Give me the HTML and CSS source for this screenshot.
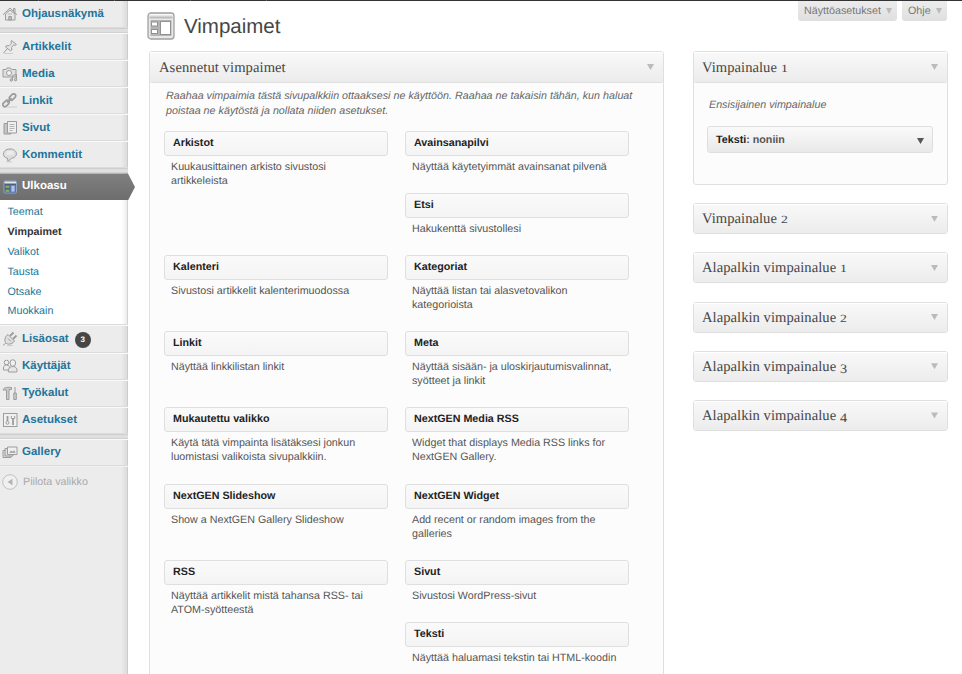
FILE: index.html
```html
<!DOCTYPE html>
<html lang="fi">
<head>
<meta charset="utf-8">
<title>Vimpaimet</title>
<link rel="stylesheet" href="styles.css">
</head>
<body>
<div class="topbar"><i></i><i></i><i></i><i></i></div>
<div class="layout">
<nav class="sidebar">
  <a class="item first"><svg class="ico" viewBox="0 0 16 16"><path d="M3.500 8v6h9.500V8L8 4z" fill="#e6e6e6"/><path d="M1 8.800 8 2l7 6.800M11.500 5V2.500H13V7"/><path d="M6.800 14v-3.500h2.600V14z" fill="#bbb"/><path d="M6 8h4" stroke="#bbb"/></svg><span>Ohjausnäkymä</span></a>
  <div class="sep"></div>
  <a class="item"><svg class="ico" viewBox="0 0 16 16"><path d="m9.500 1.500 5 4-1.500.8-1.500-.3-2 2.500.3 2.500-1.300.8L3.500 8l.8-1.300 2.700.1L9.500 4.300 9 2.500z" fill="#e6e6e6"/><path d="m5.500 9.500-4 4.500"/><path d="M2 14.500h9" stroke="#ccc"/></svg><span>Artikkelit</span></a>
  <a class="item"><svg class="ico" viewBox="0 0 16 16"><path d="M1 3.500h3l1-1.500h3.500l1 1.500H14V11H1z" fill="#e0e0e0"/><circle cx="7" cy="7" r="2.500" fill="#f5f5f5"/><path d="M10.500 14V9.500l4-1v5"/><circle cx="9.300" cy="14" r="1.200" fill="#ccc"/><circle cx="13.500" cy="13.700" r="1.200" fill="#ccc"/></svg><span>Media</span></a>
  <a class="item"><svg class="ico" viewBox="0 0 16 16"><g stroke-width="1.700"><rect x="-3.600" y="-2" width="7.200" height="4" rx="2" transform="translate(10.500 4) rotate(-45)"/><rect x="-3.600" y="-2" width="7.200" height="4" rx="2" transform="translate(4 10.500) rotate(-45)"/><path d="m5 9.500 4.500-4.500"/></g><path d="M5 14h10" stroke="#ccc"/></svg><span>Linkit</span></a>
  <a class="item"><svg class="ico" viewBox="0 0 16 16"><path d="M5 3.500H2V14h7v-1" fill="#c4c4c4"/><path d="M5.500 1.500h9v11.500h-9z" fill="#f0f0f0"/><path d="M7.500 4.500h5M7.500 6.500h5M7.500 8.500h5M7.500 10.500h3" stroke="#b4b4b4"/></svg><span>Sivut</span></a>
  <a class="item"><svg class="ico" viewBox="0 0 16 16"><path d="M5.500 11.300C-1 10 .5 2 8 2s9 8 1.500 9.300L6 14.500z" fill="#dedede"/><path d="M4.500 5h7M4.500 7h7" stroke="#f8f8f8"/><path d="M4 14.800h6" stroke="#ccc"/></svg><span>Kommentit</span></a>
  <div class="sep"></div>
  <a class="item active"><svg class="ico" viewBox="0 0 16 16"><rect x="2" y="2" width="12.500" height="12" rx="1" fill="#4b6070" stroke="#8fa5c0"/><path d="M2.500 3.500h11.500" stroke="#e4e9ef" stroke-width="2"/><path d="M3.500 6.500h4V9h-4zM3.500 10.500h4V13h-4z" fill="#7cac65" stroke="none"/><rect x="9" y="6.500" width="4" height="6.500" fill="#b4c3ec" stroke="#6986d3"/></svg><span>Ulkoasu</span></a>
  <div class="submenu">
    <a>Teemat</a><a class="current">Vimpaimet</a><a>Valikot</a><a>Tausta</a><a>Otsake</a><a>Muokkain</a>
  </div>
  <a class="item"><svg class="ico" viewBox="0 0 16 16"><path d="m6 3.500 6.500 6.500c-1.500 2.500-5 4-8 2.500l-1-1C2 8.500 3.500 5 6 3.500z" fill="#e0e0e0"/><path d="m8 5 3.500-3.500M11 8l3.500-3.500" stroke-width="1.800"/><path d="M3.800 12 1 14.500M6 7.500l3 3"/><path d="M5 14.500h6" stroke="#ccc"/></svg><span>Lisäosat</span><b class="count">3</b></a>
  <a class="item"><svg class="ico" viewBox="0 0 16 16"><circle cx="4.500" cy="4.500" r="2.300" fill="#f0f0f0"/><path d="M1.500 12c-.5-3 .5-5 3-5S8 9 7.500 12z" fill="#eee"/><ellipse cx="10.800" cy="5" rx="2.800" ry="3.300" fill="#f0f0f0"/><path d="M6.500 14c-1-3 1.200-5.500 4.300-5.500s5 2.500 4 5.500z" fill="#e5e5e5"/></svg><span>Käyttäjät</span></a>
  <a class="item"><svg class="ico" viewBox="0 0 16 16"><path d="M1 5c1-2.500 3-3 8.500-2.500v2H7V14.500H4.500V5z" fill="#ccc"/><path d="M13 2v6"/><path d="M11.800 8h2.500v6.500h-2.500z" fill="#ccc"/></svg><span>Työkalut</span></a>
  <a class="item"><svg class="ico" viewBox="0 0 16 16"><rect x="1.500" y="1.500" width="13.500" height="13" fill="#f0f0f0"/><path d="M5.500 4v5M11 7v6" stroke-width="1.800"/><circle cx="5.500" cy="10.800" r="1.500" fill="#eee"/><path d="M9.300 4v2.500h3.400V4"/></svg><span>Asetukset</span></a>
  <div class="sep"></div>
  <a class="item"><svg class="ico" viewBox="0 0 16 16"><path d="M4 6.500H1v7h8V12" fill="#ddd"/><path d="M5 4.500H3v7.500h8v-1.500" fill="#ddd"/><path d="M5.500 3h9.500v7.500H5.500z" fill="#f0f0f0"/><path d="m7 9 2-2.500 2 1L12.500 6l1 3z" fill="#aaa" stroke="none"/></svg><span>Gallery</span></a>
  <a class="collapse"><svg viewBox="0 0 16 16"><circle cx="8" cy="8" r="7.300" fill="#f0f0f0" stroke="#c0c0c0"/><path d="M10.500 4.800v6.400L5.500 8z" fill="#b4b4b4"/></svg><span>Piilota valikko</span></a>
</nav>
<main class="content">
  <section class="main-col">
    <header class="title"><svg viewBox="0 0 28 28"><rect x="1" y="1" width="26" height="26" rx="3" fill="#e8e8e8" stroke="#a0a0a0" stroke-width="1.300"/><path d="M2.500 2.500h23" stroke="#f8f8f8"/><path d="M2.500 5.500h23" stroke="#bdbdbd" stroke-width="2"/><rect x="3.500" y="8" width="21" height="16" fill="#b4b4b4"/><g fill="#fff" stroke="#929292"><rect x="4.500" y="10" width="6" height="4"/><rect x="4.500" y="17.500" width="6" height="4"/><rect x="13.500" y="9.500" width="10" height="13"/></g></svg><h1>Vimpaimet</h1></header>
    <div class="panel installed">
      <div class="head"><h2 class="wide">Asennetut vimpaimet</h2><i class="arrow"></i></div>
      <div class="body">
        <p class="intro">Raahaa vimpaimia tästä sivupalkkiin ottaaksesi ne käyttöön. Raahaa ne takaisin tähän, kun haluat<br>poistaa ne käytöstä ja nollata niiden asetukset.</p>
        <div class="widgets">
          <div class="widget"><h3>Arkistot</h3><p>Kuukausittainen arkisto sivustosi<br>artikkeleista</p></div>
          <div class="widget"><h3>Avainsanapilvi</h3><p>Näyttää käytetyimmät avainsanat pilvenä</p></div>
          <div class="widget right"><h3>Etsi</h3><p>Hakukenttä sivustollesi</p></div>
          <div class="widget"><h3>Kalenteri</h3><p>Sivustosi artikkelit kalenterimuodossa</p></div>
          <div class="widget"><h3>Kategoriat</h3><p>Näyttää listan tai alasvetovalikon<br>kategorioista</p></div>
          <div class="widget"><h3>Linkit</h3><p>Näyttää linkkilistan linkit</p></div>
          <div class="widget"><h3>Meta</h3><p>Näyttää sisään- ja uloskirjautumisvalinnat,<br>syötteet ja linkit</p></div>
          <div class="widget"><h3>Mukautettu valikko</h3><p>Käytä tätä vimpainta lisätäksesi jonkun<br>luomistasi valikoista sivupalkkiin.</p></div>
          <div class="widget"><h3>NextGEN Media RSS</h3><p>Widget that displays Media RSS links for<br>NextGEN Gallery.</p></div>
          <div class="widget"><h3>NextGEN Slideshow</h3><p>Show a NextGEN Gallery Slideshow</p></div>
          <div class="widget"><h3>NextGEN Widget</h3><p>Add recent or random images from the<br>galleries</p></div>
          <div class="widget"><h3>RSS</h3><p>Näyttää artikkelit mistä tahansa RSS- tai<br>ATOM-syötteestä</p></div>
          <div class="widget"><h3>Sivut</h3><p>Sivustosi WordPress-sivut</p></div>
          <div class="widget right"><h3>Teksti</h3><p>Näyttää haluamasi tekstin tai HTML-koodin</p></div>
        </div>
      </div>
    </div>
  </section>
  <aside class="side-col">
    <div class="tabs"><a class="t1"><span>Näyttöasetukset</span><i class="arrow"></i></a><a class="t2"><span>Ohje</span><i class="arrow"></i></a></div>
    <div class="areas">
      <div class="panel open">
        <div class="head"><h2>Vimpainalue <span class="digit">1</span></h2><i class="arrow"></i></div>
        <div class="body"><p>Ensisijainen vimpainalue</p><div class="placed"><span><b>Teksti</b>: noniin</span><i class="arrow"></i></div></div>
      </div>
      <div class="panel"><div class="head"><h2>Vimpainalue <span class="digit">2</span></h2><i class="arrow"></i></div></div>
      <div class="panel"><div class="head"><h2>Alapalkin vimpainalue <span class="digit">1</span></h2><i class="arrow"></i></div></div>
      <div class="panel"><div class="head"><h2>Alapalkin vimpainalue <span class="digit">2</span></h2><i class="arrow"></i></div></div>
      <div class="panel"><div class="head"><h2>Alapalkin vimpainalue <span class="digit low">3</span></h2><i class="arrow"></i></div></div>
      <div class="panel"><div class="head"><h2>Alapalkin vimpainalue <span class="digit low">4</span></h2><i class="arrow"></i></div></div>
    </div>
  </aside>
</main>
</div>
</body>
</html>
```
FILE: styles.css
```css
* { box-sizing: border-box; }
body {
  margin: 0;
  height: 674px;
  overflow: hidden;
  background: #fff;
  color: #555;
  font: 10.73px/14px "Liberation Sans", Arial, sans-serif;
  text-rendering: geometricPrecision;
}
h1, h2, h3, p { margin: 0; font-weight: normal; }
.topbar { display: flex; gap: 75px; height: 1px; padding-left: 38px; background: #333; }
.topbar i { width: 1px; background: #666; }
.layout { display: flex; height: 673px; }

.sidebar {
  width: 128px;
  flex: none;
  background: linear-gradient(90deg, transparent 121px, #dcdcdc 127px, #bbb 128px), #ececec;
}
.item {
  display: flex;
  align-items: center;
  height: 27.1px;
  padding-left: 2px;
  border-top: 1px solid #f9f9f9;
  border-bottom: 1px solid #dcdcdc;
  color: #21759b;
  font-size: 11.5px;
  font-weight: bold;
}
.item.first { border-top: 0; height: 27px; }
.ico { width: 16px; height: 16px; margin-right: 4px; fill: none; stroke: #9c9c9c; stroke-width: 1; }
.sep { height: 5px; background: #dfdfdf; border-top: 1px solid #cfcfcf; border-bottom: 1px solid #d2d2d2; }
.item.active {
  position: relative;
  width: 136px;
  height: 27px;
  border: 0;
  color: #fff;
  background: linear-gradient(#808080, #6d6d6d);
  clip-path: polygon(0 0, 128px 0, 135px 50%, 128px 100%, 0 100%);
}
.item.active span { position: relative; top: -1px; }
.submenu {
  height: 125px;
  padding: 3px 0 0 7.5px;
  background: linear-gradient(90deg, transparent 122px, #ececec 127px, #bbb 128px), #fff;
  border-bottom: 1px solid #dcdcdc;
}
.submenu a { display: block; height: 19.8px; line-height: 19.8px; color: #21759b; }
.submenu .current { color: #333; font-weight: bold; }
.count {
  display: flex;
  align-items: center;
  justify-content: center;
  width: 16px;
  height: 16px;
  margin: 2px 0 0 6px;
  border-radius: 8px;
  background: #464646;
  color: #fff;
  font-size: 8px;
}
.collapse { display: flex; align-items: center; gap: 5px; height: 32px; padding-left: 2px; color: #aaa; border-top: 1px solid #f0f0f0; }
.collapse svg { width: 16px; height: 16px; }

.content { display: flex; flex: 1; align-items: flex-start; }
.main-col { width: 515px; margin-left: 21px; }
.title { display: flex; align-items: center; height: 50px; }
.title svg { width: 28px; height: 28px; margin-left: -2px; }
.title h1 { padding-top: 1px; margin-left: 9px; font-size: 20.5px; line-height: 28px; color: #464646; }

.panel { border: 1px solid #dfdfdf; border-radius: 3px; background: #fcfcfc; }
.head {
  display: flex;
  align-items: center;
  justify-content: space-between;
  height: 29px;
  padding: 0 9px 0 8px;
  border-radius: 2px;
  background: linear-gradient(#f9f9f9, #ececec);
  box-shadow: inset 0 1px #fff;
}
.installed .head, .open .head { height: 31px; border-bottom: 1px solid #dfdfdf; }
.head h2 { padding-top: 2px; color: #464646; font: 14.6px/20px "Liberation Serif", Georgia, serif; letter-spacing: 0.04px; white-space: nowrap; }
.head h2.wide { padding-left: 1px; letter-spacing: 0.08px; }
.digit { display: inline-block; font-size: 11px; transform: scaleX(1.25); transform-origin: left; }
.digit.low { font-size: 13px; position: relative; top: 2px; transform: scaleX(1.1); }
.arrow { width: 7px; height: 6px; background: #bbb; clip-path: polygon(0 0, 100% 0, 50% 100%); }

.installed { height: 640px; }
.installed .body { padding: 6px 14px 0; }
.intro { height: 42px; padding-left: 2px; line-height: 15px; font-style: italic; color: #666; white-space: nowrap; letter-spacing: 0.01px; }
.widgets { display: grid; grid-template-columns: 224px 224px; column-gap: 17px; grid-template-rows: 62px 62px 76px 76px 77px 76px 62px 62px; }
.right { grid-column: 2; }
.widget h3 {
  height: 25px;
  padding-left: 8px;
  border: 1px solid #dfdfdf;
  border-radius: 3px;
  background: linear-gradient(#fafafa, #f4f4f4);
  color: #222;
  font-size: 10.73px;
  font-weight: bold;
  line-height: 22px;
}
.widget p { padding: 4px 0 0 7px; white-space: nowrap; }

.side-col { width: 255px; margin-left: 29px; }
.tabs { display: flex; justify-content: flex-end; gap: 5px; height: 50px; padding-right: 1px; }
.tabs a {
  display: flex;
  align-items: center;
  justify-content: space-between;
  height: 20px;
  padding: 0 5px 0 6px;
  border-radius: 0 0 3px 3px;
  background: linear-gradient(#ececec, #dfdfdf);
  color: #777;
}
.t1 { width: 99px; }
.t2 { width: 45px; }
.tabs .arrow { width: 6px; }
.areas { display: flex; flex-direction: column; gap: 18.2px; }
.areas .panel { height: 31px; }
.areas .open { height: 134px; }
.open p { padding: 15px 15px 0; font-style: italic; color: #666; }
.placed {
  display: flex;
  align-items: center;
  justify-content: space-between;
  height: 27px;
  margin: 14px 14px 0 13px;
  padding: 0 8px;
  border: 1px solid #dfdfdf;
  border-radius: 3px;
  background: linear-gradient(#fafafa, #e9e9e9);
  font-weight: bold;
}
.placed b { color: #222; }
.placed .arrow { background: #555; margin-top: 3px; }
```
